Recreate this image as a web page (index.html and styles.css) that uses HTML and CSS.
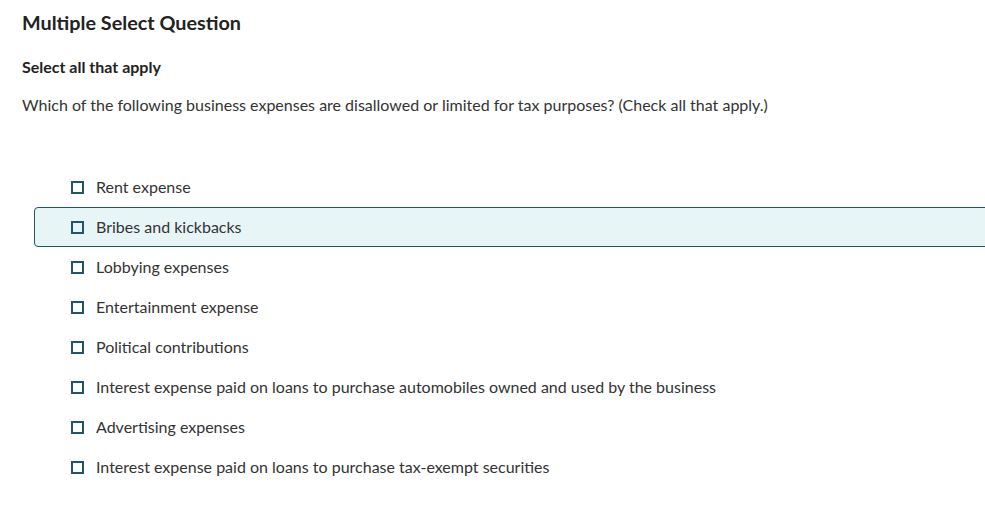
FILE: index.html
```html
<!DOCTYPE html>
<html lang="en">
<head>
    <meta charset="UTF-8">
    <meta name="viewport" content="width=device-width, initial-scale=1.0">
    <title>Multiple Select Question</title>
    <link rel="stylesheet" href="styles.css">
</head>
<body>
    <div class="question">
        <h1>Multiple Select Question</h1>
        <p class="instruction">Select all that apply</p>
        <p class="prompt">Which of the following business expenses are disallowed or limited for tax purposes? (Check all that apply.)</p>

        <ul class="choices">
            <li class="choice"><span class="box"></span>Rent expense</li>
            <li class="choice focused"><span class="box"></span>Bribes and kickbacks</li>
            <li class="choice"><span class="box"></span>Lobbying expenses</li>
            <li class="choice"><span class="box"></span>Entertainment expense</li>
            <li class="choice"><span class="box"></span>Political contributions</li>
            <li class="choice"><span class="box"></span>Interest expense paid on loans to purchase automobiles owned and used by the business</li>
            <li class="choice"><span class="box"></span>Advertising expenses</li>
            <li class="choice"><span class="box"></span>Interest expense paid on loans to purchase tax-exempt securities</li>
        </ul>
    </div>
</body>
</html>
```

FILE: styles.css
```css
body {
    margin: 0;
    font-family: Lato, "Open Sans", Arial, sans-serif;
    color: #333;
    background: white;
    overflow-x: hidden;
}
.question {
    padding: 11px 0 0 22px;
}
h1 {
    margin: 0;
    font-size: 19.8px;
    line-height: 22px;
    font-weight: 700;
    color: #222;
}
.instruction {
    margin: 23px 0 0;
    font-size: 16px;
    line-height: 22px;
    font-weight: 700;
    color: #222;
}
.prompt {
    margin: 16px 0 0;
    font-size: 16px;
    line-height: 22px;
    color: #333;
}
.choices {
    list-style: none;
    margin: 51px -40px 0 12px;
    padding: 0;
}
.choice {
    display: flex;
    align-items: center;
    height: 40px;
    box-sizing: border-box;
    padding-left: 36px;
    padding-bottom: 1px;
    border: 1px solid transparent;
    border-radius: 4px;
    font-size: 16px;
    color: #333;
}
.choice.focused {
    background-color: #e8f5f7;
    border-color: #1f5766;
}
.box {
    width: 13px;
    height: 13px;
    box-sizing: border-box;
    border: 2px solid #1f5766;
    margin-right: 12px;
    margin-top: 1px;
    flex-shrink: 0;
}
```
